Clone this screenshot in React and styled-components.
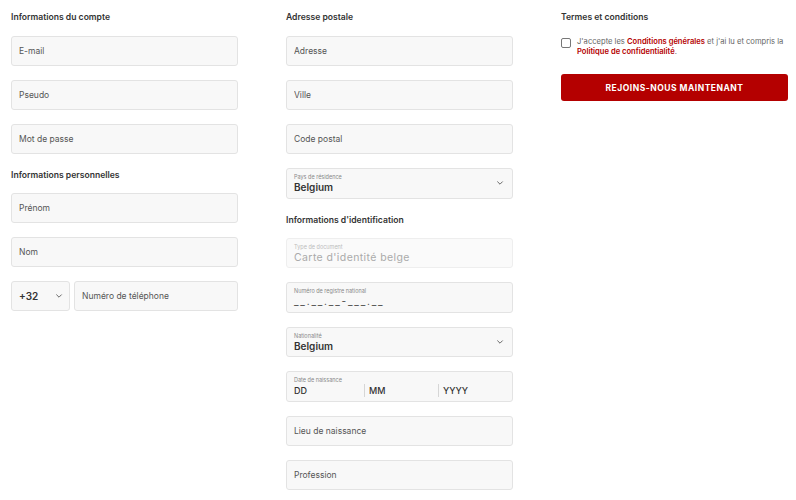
import styled, { createGlobalStyle } from 'styled-components';

const GlobalStyle = createGlobalStyle`
  * { box-sizing: border-box; }
  body {
    margin: 0;
    background: #fff;
    font-family: Inter, "Noto Sans", Arial, sans-serif;
    color: #333;
  }
`;

const Chevron = () => (
  <svg width="8" height="8" viewBox="0 0 10 10" fill="none">
    <path d="M2 3.5L5 6.5L8 3.5" stroke="#555" strokeWidth="1.1" strokeLinecap="round" strokeLinejoin="round" />
  </svg>
);

const App = () => {
  return (
    <>
      <GlobalStyle />
      <Page>
        <Column>
          <Heading first>Informations du compte</Heading>
          <Field placeholder="E-mail" />
          <Field placeholder="Pseudo" />
          <Field placeholder="Mot de passe" />
          <Heading>Informations personnelles</Heading>
          <Field placeholder="Prénom" />
          <Field placeholder="Nom" />
          <PhoneRow>
            <CodeSelect>
              <span>+32</span>
              <Chevron />
            </CodeSelect>
            <Field placeholder="Numéro de téléphone" />
          </PhoneRow>
        </Column>

        <Column>
          <Heading first>Adresse postale</Heading>
          <Field placeholder="Adresse" />
          <Field placeholder="Ville" />
          <Field placeholder="Code postal" />
          <LabelBox>
            <LabelInner>
              <SmallLabel>Pays de résidence</SmallLabel>
              <Value>Belgium</Value>
            </LabelInner>
            <Chevron />
          </LabelBox>
          <Heading>Informations d'identification</Heading>
          <LabelBox disabled>
            <LabelInner>
              <SmallLabel disabled>Type de document</SmallLabel>
              <Value disabled>Carte d'identité belge</Value>
            </LabelInner>
          </LabelBox>
          <LabelBox>
            <LabelInner>
              <SmallLabel>Numéro de registre national</SmallLabel>
              <Mask>__.__.__-___.__</Mask>
            </LabelInner>
          </LabelBox>
          <LabelBox>
            <LabelInner>
              <SmallLabel>Nationalité</SmallLabel>
              <Value>Belgium</Value>
            </LabelInner>
            <Chevron />
          </LabelBox>
          <LabelBox>
            <LabelInner>
              <SmallLabel>Date de naissance</SmallLabel>
              <DateRow>
                <DatePart>DD</DatePart>
                <DatePart divided>MM</DatePart>
                <DatePart divided>YYYY</DatePart>
              </DateRow>
            </LabelInner>
          </LabelBox>
          <Field placeholder="Lieu de naissance" />
          <Field placeholder="Profession" />
        </Column>

        <Column>
          <Heading first>Termes et conditions</Heading>
          <Terms>
            <Check />
            <TermsText>
              J'accepte les <Link>Conditions générales</Link> et j'ai lu et compris la{' '}
              <Link>Politique de confidentialité</Link>.
            </TermsText>
          </Terms>
          <JoinButton>Rejoins-nous maintenant</JoinButton>
        </Column>
      </Page>
    </>
  );
};

export default App;

const Page = styled.div`
  display: grid;
  grid-template-columns: repeat(3, 227px);
  column-gap: 48px;
  padding: 11px 0 0 11px;
  width: 796px;
  height: 500px;
  overflow: hidden;
`;

const Column = styled.div`
  display: flex;
  flex-direction: column;
  gap: 14px;
`;

const Heading = styled.h3`
  margin: ${p => (p.first ? '0 0 -1px' : '1px 0 -2px')};
  font-size: 8.6px;
  line-height: 12px;
  font-weight: 600;
  color: #333;
`;

const Field = styled.input`
  display: block;
  width: 100%;
  height: 30px;
  padding: 0 7px;
  background: #f8f8f8;
  border: 1px solid #e3e3e3;
  border-radius: 3px;
  font-family: inherit;
  font-size: 8.5px;
  color: #333;
  outline: none;
  &::placeholder { color: #555; }
`;

const PhoneRow = styled.div`
  display: flex;
  gap: 4px;
`;

const CodeSelect = styled.div`
  flex: 0 0 59px;
  height: 30px;
  display: flex;
  align-items: center;
  justify-content: space-between;
  padding: 0 6px 0 7px;
  background: #f8f8f8;
  border: 1px solid #e3e3e3;
  border-radius: 3px;
  font-size: 10px;
  font-weight: 600;
  color: #333;
`;

const LabelBox = styled.div`
  height: 30.5px;
  display: flex;
  align-items: center;
  justify-content: space-between;
  padding: 0 8px 0 7px;
  background: ${p => (p.disabled ? '#fafafa' : '#f8f8f8')};
  border: 1px solid ${p => (p.disabled ? '#eeeeee' : '#e3e3e3')};
  border-radius: 3px;
`;

const LabelInner = styled.div`
  flex: 1;
  display: flex;
  flex-direction: column;
  padding-top: 1px;
`;

const SmallLabel = styled.span`
  font-size: 5.5px;
  line-height: 8px;
  color: ${p => (p.disabled ? '#bdbdbd' : '#888')};
`;

const Value = styled.span`
  font-size: ${p => (p.disabled ? '10.5px' : '10px')};
  line-height: 13px;
  font-weight: ${p => (p.disabled ? 400 : 600)};
  color: ${p => (p.disabled ? '#aaa' : '#333')};
  letter-spacing: ${p => (p.disabled ? '0.4px' : '0')};
`;

const Mask = styled.span`
  font-size: 10px;
  line-height: 13px;
  color: #444;
  letter-spacing: 1.8px;
`;

const DateRow = styled.div`
  display: grid;
  grid-template-columns: 70px 74px 1fr;
`;

const DatePart = styled.span`
  font-size: 9px;
  line-height: 13px;
  font-weight: 500;
  color: #333;
  padding-left: ${p => (p.divided ? '4px' : '0')};
  border-left: ${p => (p.divided ? '1px solid #d6d6d6' : 'none')};
`;

const Terms = styled.div`
  display: flex;
  gap: 6px;
  align-items: flex-start;
  margin-top: 1px;
`;

const Check = styled.span`
  flex: 0 0 10px;
  height: 10px;
  margin-top: 1px;
  border: 1px solid #777;
  border-radius: 2px;
  background: #fff;
`;

const TermsText = styled.p`
  margin: 0;
  font-size: 7.6px;
  line-height: 9.5px;
  color: #666;
`;

const Link = styled.span`
  color: #b40000;
  font-weight: 600;
`;

const JoinButton = styled.button`
  height: 27px;
  margin-top: 4px;
  width: 100%;
  border: none;
  border-radius: 3px;
  background: #b40000;
  color: #fff;
  font-family: inherit;
  font-size: 8.5px;
  font-weight: 700;
  letter-spacing: 0.5px;
  text-transform: uppercase;
`;
